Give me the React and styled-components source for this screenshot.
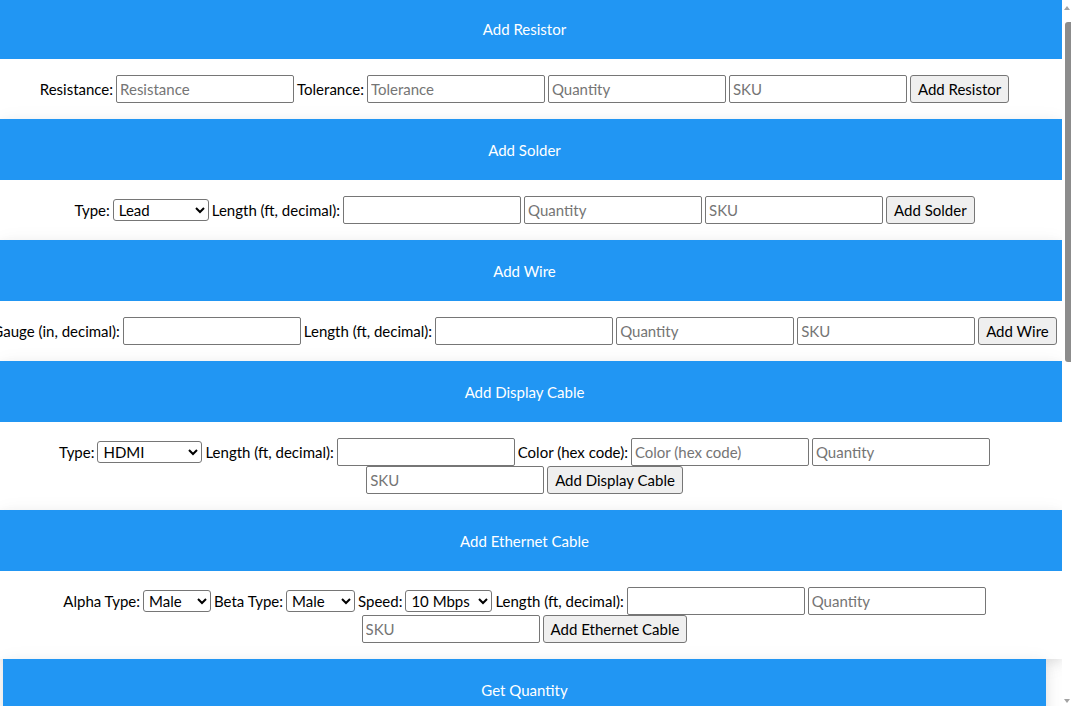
import React from "react";
import styled, { createGlobalStyle } from "styled-components";

const GlobalStyle = createGlobalStyle`
    html, body {
        margin: 0;
        padding: 0;
        overflow: hidden;
        background: #fff;
        font-family: Lato, "Open Sans", sans-serif;
        font-size: 15px;
        color: #000;
    }
`;

const Shell = styled.div`
    display: flex;
    width: 1071px;
    height: 706px;
    overflow: hidden;
`;

// the page is scrolled by a couple of pixels in the reference
const Page = styled.main`
    flex: 1;
    min-width: 0;
    height: 706px;
    overflow: hidden;

    & > section:first-child {
        margin-top: -2px;
    }
`;

const Card = styled.section`
    margin: ${props => (props.$inset ? "0 16px 0 3px" : "0")};
    background: #fff;
    box-shadow: 0 4px 10px 0 rgba(0, 0, 0, 0.08), 0 4px 20px 0 rgba(0, 0, 0, 0.07);
    position: relative;
`;

const Header = styled.h2`
    margin: 0;
    height: 61px;
    display: flex;
    align-items: center;
    justify-content: center;
    padding-right: ${props => (props.$inset ? "0" : "13px")};
    background-color: #2196f3;
    color: #fff;
    font-size: 15px;
    font-weight: 400;
`;

const Body = styled.div`
    display: flex;
    flex-direction: column;
    padding: 16px ${props => (props.$inset ? "0" : "13px")} 16px 0;
`;

const Row = styled.div`
    display: flex;
    justify-content: center;
    align-items: center;
    gap: 3px;
    height: 28px;
    white-space: nowrap;
`;

const Label = styled.label`
    font-size: 15px;
    color: #000;
`;

const Input = styled.input`
    box-sizing: border-box;
    flex: none;
    width: 178px;
    height: 28px;
    padding: 1px 3px;
    border: 1px solid #767676;
    border-radius: 2px;
    font-family: Lato, sans-serif;
    font-size: 15px;
    color: #000;
    background: #fff;

    &::placeholder {
        color: #757575;
    }
`;

const Select = styled.select`
    box-sizing: border-box;
    flex: none;
    width: ${props => props.$w}px;
    height: 22px;
    padding: 0 1px;
    border: 1px solid #767676;
    border-radius: 3px;
    background: #fff;
    font-family: Lato, sans-serif;
    font-size: 15px;
    color: #000;
`;

const Button = styled.button`
    flex: none;
    height: 28px;
    padding: 1px 7px;
    border: 1px solid #767676;
    border-radius: 3px;
    background-color: #efefef;
    font-family: Lato, sans-serif;
    font-size: 15px;
    color: #000;
    cursor: pointer;
`;

const Rail = styled.div`
    flex: none;
    width: 9px;
    height: 706px;
    display: flex;
    flex-direction: column;
    align-items: flex-end;
    background: #fff;
`;

const Arrow = styled.div`
    width: 0;
    height: 0;
    margin: ${props => (props.$down ? "auto 1px 3px 0" : "6px 1px 0 0")};
    border-left: 3px solid transparent;
    border-right: 3px solid transparent;
    ${props =>
        props.$down
            ? "border-top: 4px solid #a3a3a3;"
            : "border-bottom: 4px solid #a3a3a3;"}
`;

const Thumb = styled.div`
    width: 6px;
    height: 340px;
    margin-top: 12px;
    border-radius: 3px 0 0 3px;
    background: #8c8c8c;
`;

const App = () => {
    return (
        <Shell>
            <GlobalStyle />
            <Page>
                <Card>
                    <Header>Add Resistor</Header>
                    <Body>
                        <Row>
                            <Label htmlFor="resistance">Resistance:</Label>
                            <Input id="resistance" placeholder="Resistance" />
                            <Label htmlFor="tolerance">Tolerance:</Label>
                            <Input id="tolerance" placeholder="Tolerance" />
                            <Input placeholder="Quantity" />
                            <Input placeholder="SKU" />
                            <Button>Add Resistor</Button>
                        </Row>
                    </Body>
                </Card>

                <Card>
                    <Header>Add Solder</Header>
                    <Body>
                        <Row>
                            <Label htmlFor="solder_type">Type:</Label>
                            <Select id="solder_type" $w={96}>
                                <option>Lead</option>
                                <option>Lead-free</option>
                            </Select>
                            <Label htmlFor="solder_length">Length (ft, decimal):</Label>
                            <Input id="solder_length" />
                            <Input placeholder="Quantity" />
                            <Input placeholder="SKU" />
                            <Button>Add Solder</Button>
                        </Row>
                    </Body>
                </Card>

                <Card>
                    <Header>Add Wire</Header>
                    <Body>
                        <Row>
                            <Label htmlFor="gauge">Gauge (in, decimal):</Label>
                            <Input id="gauge" />
                            <Label htmlFor="wire_length">Length (ft, decimal):</Label>
                            <Input id="wire_length" />
                            <Input placeholder="Quantity" />
                            <Input placeholder="SKU" />
                            <Button>Add Wire</Button>
                        </Row>
                    </Body>
                </Card>

                <Card>
                    <Header>Add Display Cable</Header>
                    <Body>
                        <Row>
                            <Label htmlFor="display_type">Type:</Label>
                            <Select id="display_type" $w={105}>
                                <option>HDMI</option>
                                <option>DisplayPort</option>
                                <option>VGA</option>
                                <option>DVI</option>
                            </Select>
                            <Label htmlFor="display_length">Length (ft, decimal):</Label>
                            <Input id="display_length" />
                            <Label htmlFor="display_color">Color (hex code):</Label>
                            <Input id="display_color" placeholder="Color (hex code)" />
                            <Input placeholder="Quantity" />
                        </Row>
                        <Row>
                            <Input placeholder="SKU" />
                            <Button>Add Display Cable</Button>
                        </Row>
                    </Body>
                </Card>

                <Card>
                    <Header>Add Ethernet Cable</Header>
                    <Body>
                        <Row>
                            <Label htmlFor="alpha">Alpha Type:</Label>
                            <Select id="alpha" $w={68}>
                                <option>Male</option>
                                <option>Female</option>
                            </Select>
                            <Label htmlFor="beta">Beta Type:</Label>
                            <Select id="beta" $w={69}>
                                <option>Male</option>
                                <option>Female</option>
                            </Select>
                            <Label htmlFor="speed">Speed:</Label>
                            <Select id="speed" $w={87}>
                                <option>10 Mbps</option>
                                <option>100 Mbps</option>
                                <option>1 Gbps</option>
                            </Select>
                            <Label htmlFor="eth_length">Length (ft, decimal):</Label>
                            <Input id="eth_length" />
                            <Input placeholder="Quantity" />
                        </Row>
                        <Row>
                            <Input placeholder="SKU" />
                            <Button>Add Ethernet Cable</Button>
                        </Row>
                    </Body>
                </Card>

                <Card $inset>
                    <Header $inset>Get Quantity</Header>
                    <Body $inset>
                        <Row>
                            <Input placeholder="SKU" />
                            <Button>Get Quantity</Button>
                        </Row>
                    </Body>
                </Card>
            </Page>
            <Rail>
                <Arrow />
                <Thumb />
                <Arrow $down />
            </Rail>
        </Shell>
    );
};

export default App;
